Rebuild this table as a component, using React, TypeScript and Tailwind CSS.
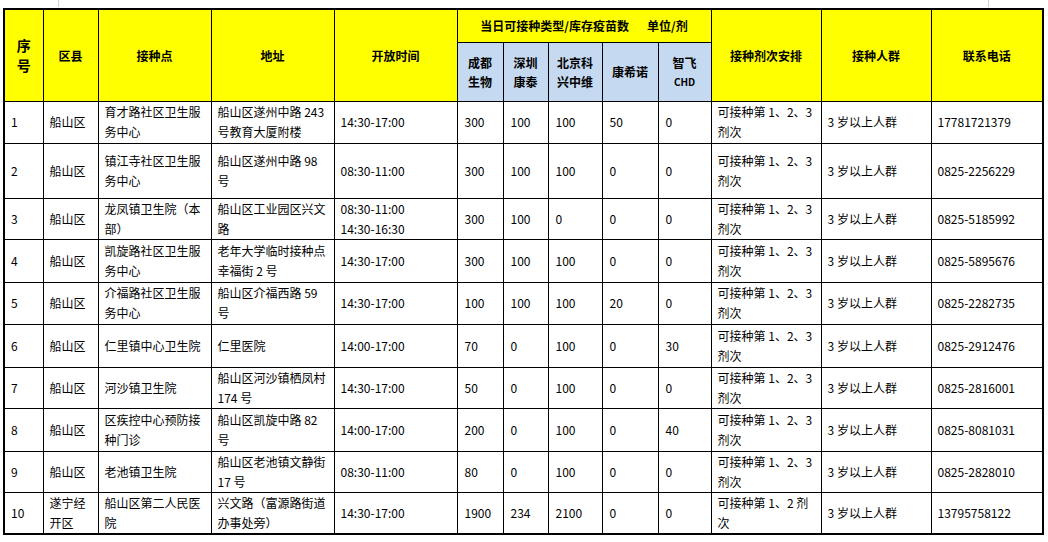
import React from "react";

type Row = {
  h: string;
  no: string;
  area: string[];
  site: string[];
  addr: string[];
  time: string[];
  n: string[];
  plan: string[];
  phone: string;
};

const plan3 = ["可接种第 1、2、3", "剂次"];

const rows: Row[] = [
  { h: "h-[42px]", no: "1", area: ["船山区"], site: ["育才路社区卫生服", "务中心"], addr: ["船山区遂州中路 243", "号教育大厦附楼"], time: ["14:30-17:00"], n: ["300", "100", "100", "50", "0"], plan: plan3, phone: "17781721379" },
  { h: "h-[55px]", no: "2", area: ["船山区"], site: ["镇江寺社区卫生服", "务中心"], addr: ["船山区遂州中路 98", "号"], time: ["08:30-11:00"], n: ["300", "100", "100", "0", "0"], plan: plan3, phone: "0825-2256229" },
  { h: "h-[41px]", no: "3", area: ["船山区"], site: ["龙凤镇卫生院（本", "部）"], addr: ["船山区工业园区兴文", "路"], time: ["08:30-11:00", "14:30-16:30"], n: ["300", "100", "0", "0", "0"], plan: plan3, phone: "0825-5185992" },
  { h: "h-[43px]", no: "4", area: ["船山区"], site: ["凯旋路社区卫生服", "务中心"], addr: ["老年大学临时接种点", "幸福街 2 号"], time: ["14:30-17:00"], n: ["300", "100", "100", "0", "0"], plan: plan3, phone: "0825-5895676" },
  { h: "h-[42px]", no: "5", area: ["船山区"], site: ["介福路社区卫生服", "务中心"], addr: ["船山区介福西路 59", "号"], time: ["14:30-17:00"], n: ["100", "100", "100", "20", "0"], plan: plan3, phone: "0825-2282735" },
  { h: "h-[43px]", no: "6", area: ["船山区"], site: ["仁里镇中心卫生院"], addr: ["仁里医院"], time: ["14:00-17:00"], n: ["70", "0", "100", "0", "30"], plan: plan3, phone: "0825-2912476" },
  { h: "h-[41px]", no: "7", area: ["船山区"], site: ["河沙镇卫生院"], addr: ["船山区河沙镇栖凤村", "174 号"], time: ["14:30-17:00"], n: ["50", "0", "100", "0", "0"], plan: plan3, phone: "0825-2816001" },
  { h: "h-[43px]", no: "8", area: ["船山区"], site: ["区疾控中心预防接", "种门诊"], addr: ["船山区凯旋中路 82", "号"], time: ["14:00-17:00"], n: ["200", "0", "100", "0", "40"], plan: plan3, phone: "0825-8081031" },
  { h: "h-[41px]", no: "9", area: ["船山区"], site: ["老池镇卫生院"], addr: ["船山区老池镇文静街", "17 号"], time: ["08:30-11:00"], n: ["80", "0", "100", "0", "0"], plan: plan3, phone: "0825-2828010" },
  { h: "h-[42px]", no: "10", area: ["遂宁经", "开区"], site: ["船山区第二人民医", "院"], addr: ["兴文路（富源路街道", "办事处旁）"], time: ["14:30-17:00"], n: ["1900", "234", "2100", "0", "0"], plan: ["可接种第 1、2 剂", "次"], phone: "13795758122" },
];

const td = "border border-black align-middle px-[6px] py-0 text-left leading-[20px] whitespace-nowrap";
const th = "border border-black align-middle p-0 text-center font-bold leading-[19px]";

function Lines({ lines }: { lines: string[] }) {
  return (
    <>
      {lines.map((l, i) => (
        <div key={i}>{l}</div>
      ))}
    </>
  );
}

export default function App() {
  return (
    <div className="w-[1048px] h-[542px] bg-white overflow-hidden font-['Noto_Sans_CJK_SC',sans-serif] text-[12px] text-black">
      <div className="h-[8px] flex">
        <div className="w-[58px]" />
        <div className="w-px h-[7px] bg-[#d0d0d0]" />
        <div className="w-[929px]" />
        <div className="w-px h-[7px] bg-[#d0d0d0]" />
      </div>
      <table className="ml-[3px] w-[1039px] table-fixed border-collapse border-2 border-black">
        <colgroup>
          <col className="w-[39px]" />
          <col className="w-[55px]" />
          <col className="w-[113px]" />
          <col className="w-[123px]" />
          <col className="w-[123px]" />
          <col className="w-[46px]" />
          <col className="w-[45px]" />
          <col className="w-[54px]" />
          <col className="w-[56px]" />
          <col className="w-[53px]" />
          <col className="w-[110px]" />
          <col className="w-[110px]" />
          <col className="w-[112px]" />
        </colgroup>
        <thead>
          <tr className="h-[33px] bg-[#ffff00]">
            <th rowSpan={2} className={th + " text-[14px] leading-[20px]"}>
              <div>序</div>
              <div>号</div>
            </th>
            <th rowSpan={2} className={th}>区县</th>
            <th rowSpan={2} className={th}>接种点</th>
            <th rowSpan={2} className={th}>地址</th>
            <th rowSpan={2} className={th}>开放时间</th>
            <th colSpan={5} className={th}>
              当日可接种类型/库存疫苗数<span className="inline-block w-[18px]" />单位/剂
            </th>
            <th rowSpan={2} className={th}>接种剂次安排</th>
            <th rowSpan={2} className={th}>接种人群</th>
            <th rowSpan={2} className={th}>联系电话</th>
          </tr>
          <tr className="h-[59px]">
            <th className={th + " bg-[#c5d9f1]"}>
              <div>成都</div>
              <div>生物</div>
            </th>
            <th className={th + " bg-[#c5d9f1]"}>
              <div>深圳</div>
              <div>康泰</div>
            </th>
            <th className={th + " bg-[#c5d9f1]"}>
              <div>北京科</div>
              <div>兴中维</div>
            </th>
            <th className={th + " bg-[#c5d9f1]"}>康希诺</th>
            <th className={th + " bg-[#c5d9f1]"}>
              <div>智飞</div>
              <div className="text-[10px]">CHD</div>
            </th>
          </tr>
        </thead>
        <tbody>
          {rows.map((r) => (
            <tr key={r.no} className={r.h}>
              <td className={td}>{r.no}</td>
              <td className={td}>
                <Lines lines={r.area} />
              </td>
              <td className={td}>
                <Lines lines={r.site} />
              </td>
              <td className={td}>
                <Lines lines={r.addr} />
              </td>
              <td className={td}>
                <Lines lines={r.time} />
              </td>
              {r.n.map((v, i) => (
                <td key={i} className={td + " px-[7px]"}>
                  {v}
                </td>
              ))}
              <td className={td}>
                <Lines lines={r.plan} />
              </td>
              <td className={td}>3 岁以上人群</td>
              <td className={td}>{r.phone}</td>
            </tr>
          ))}
        </tbody>
      </table>
    </div>
  );
}
